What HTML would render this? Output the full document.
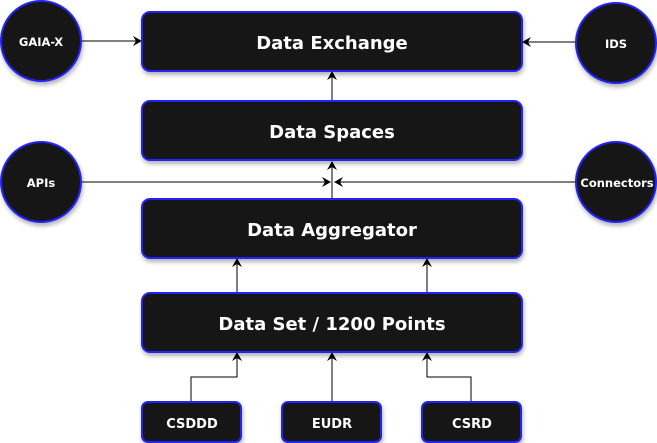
<!DOCTYPE html>
<html><head><style>html,body{margin:0;padding:0;background:#fff;width:657px;height:443px;overflow:hidden}</style></head>
<body>
<svg width="657" height="443" xmlns="http://www.w3.org/2000/svg" font-family="'DejaVu Sans', Verdana, sans-serif" font-weight="bold">
<defs>
<marker id="a" markerWidth="10" markerHeight="10" refX="8" refY="5" orient="auto" markerUnits="userSpaceOnUse"><path d="M0,0 L9,5 L0,10 L3,5 Z" fill="#000"/></marker>
<filter id="s" x="-10%" y="-10%" width="130%" height="140%"><feDropShadow dx="1" dy="3" stdDeviation="2" flood-color="#000" flood-opacity="0.3"/></filter>
</defs>
<g stroke="#000" stroke-width="1" fill="none" marker-end="url(#a)">
<path d="M81,41 H141"/>
<path d="M577,42 H523"/>
<path d="M332,101 V72"/>
<path d="M81,182 H330"/>
<path d="M577,182 H335"/>
<path d="M332,199 V162"/>
<path d="M237,293 V259"/>
<path d="M427,293 V259"/>
<path d="M191,402 V377 H237 V353"/>
<path d="M332,402 V353"/>
<path d="M471,402 V377 H427 V353"/>
</g>
<g fill="#181818" stroke="#2424ff" stroke-width="2" filter="url(#s)">
<rect x="142" y="12" width="380" height="59" rx="8"/>
<rect x="142" y="101" width="380" height="59" rx="8"/>
<rect x="142" y="199" width="380" height="59" rx="8"/>
<rect x="142" y="293" width="380" height="59" rx="8"/>
<rect x="142" y="402" width="99" height="40" rx="6"/>
<rect x="282" y="402" width="99" height="40" rx="6"/>
<rect x="422" y="402" width="99" height="40" rx="6"/>
<circle cx="41" cy="41" r="40"/>
<circle cx="616" cy="43" r="40"/>
<circle cx="41" cy="182" r="40"/>
<circle cx="616" cy="182" r="40"/>
</g>
<g fill="#fff" text-anchor="middle">
<g font-size="18">
<text x="332" y="49">Data Exchange</text>
<text x="332" y="138">Data Spaces</text>
<text x="332" y="236">Data Aggregator</text>
<text x="332" y="330">Data Set / 1200 Points</text>
</g>
<g font-size="13">
<text x="192" y="428">CSDDD</text>
<text x="332" y="428">EUDR</text>
<text x="472" y="428">CSRD</text>
</g>
<g font-size="11.5">
<text x="41" y="46">GAIA-X</text>
<text x="616" y="48">IDS</text>
<text x="41" y="187">APIs</text>
<text x="617" y="187">Connectors</text>
</g>
</g>
</svg>
</body></html>
